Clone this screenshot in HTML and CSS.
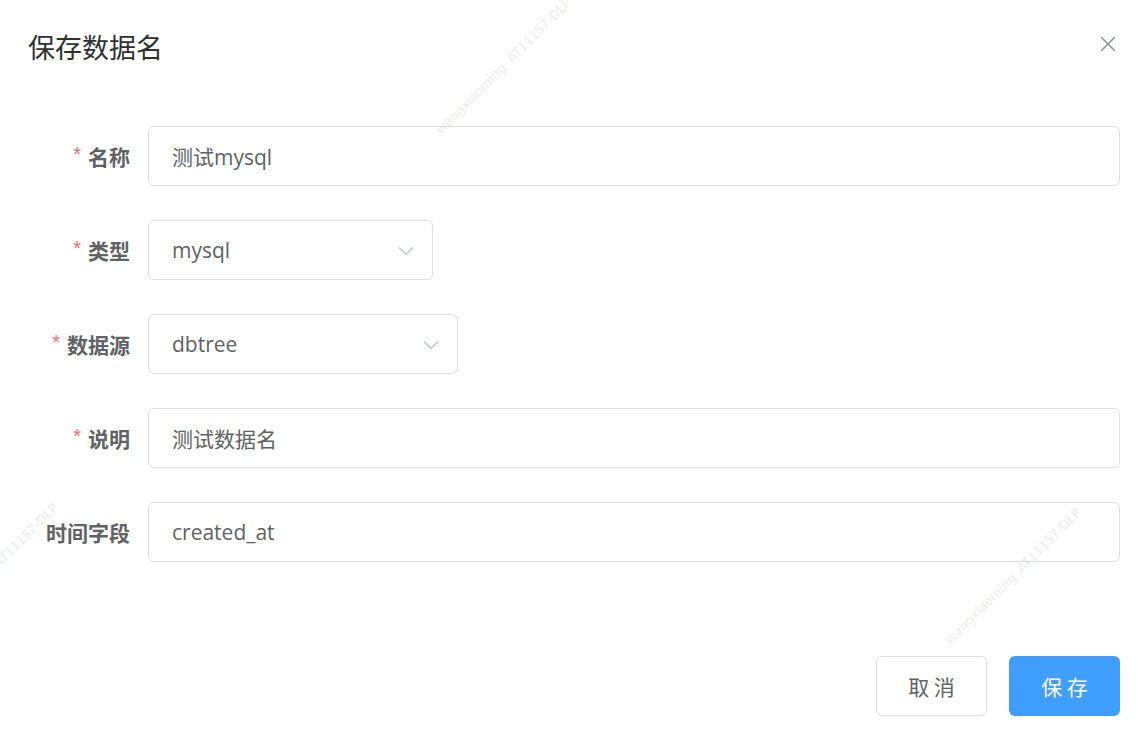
FILE: index.html
```html
<!DOCTYPE html>
<html lang="zh-CN">
<head>
<meta charset="utf-8">
<title>保存数据名</title>
<link rel="stylesheet" href="styles.css">
</head>
<body>
<div class="dialog">
  <div class="header">
    <div class="title">保存数据名</div>
    <svg class="close" width="16" height="16" viewBox="0 0 16 16"><path d="M1.5 1.5 L14.5 14.5 M14.5 1.5 L1.5 14.5" stroke="#909399" stroke-width="1.6" fill="none" stroke-linecap="round"/></svg>
  </div>
  <div class="form">
    <div class="row">
      <div class="label"><span class="req">*</span>名称</div>
      <div class="field wide">测试mysql</div>
    </div>
    <div class="row">
      <div class="label"><span class="req">*</span>类型</div>
      <div class="field select s1">mysql<svg class="arrow" width="16" height="10" viewBox="0 0 16 10"><path d="M1 1.5 L8 8.5 L15 1.5" stroke="#c0c4cc" stroke-width="1.5" fill="none"/></svg></div>
    </div>
    <div class="row">
      <div class="label"><span class="req">*</span>数据源</div>
      <div class="field select s2">dbtree<svg class="arrow" width="16" height="10" viewBox="0 0 16 10"><path d="M1 1.5 L8 8.5 L15 1.5" stroke="#c0c4cc" stroke-width="1.5" fill="none"/></svg></div>
    </div>
    <div class="row">
      <div class="label"><span class="req">*</span>说明</div>
      <div class="field wide">测试数据名</div>
    </div>
    <div class="row">
      <div class="label">时间字段</div>
      <div class="field wide">created_at</div>
    </div>
  </div>
  <div class="footer">
    <div class="btn cancel">取 消</div>
    <div class="btn primary">保 存</div>
  </div>
  <span class="wm wm1">wangxiaoming&nbsp;&nbsp;AT11157-DLP</span>
  <span class="wm wm2">wangxiaoming&nbsp;&nbsp;AT11157-DLP</span>
  <span class="wm wm3">wangxiaoming&nbsp;&nbsp;AT11157-DLP</span>
</div>
</body>
</html>
```
FILE: styles.css
```css
html, body {
  margin: 0;
  padding: 0;
  background: #ffffff;
}
body {
  font-family: "Open Sans", "Noto Sans CJK SC", sans-serif;
  color: #606266;
}
.dialog {
  position: relative;
  width: 1145px;
  height: 739px;
  overflow: hidden;
}
.header {
  height: 93px;
  display: flex;
  align-items: center;
  justify-content: space-between;
  padding: 0 29px 0 28px;
  box-sizing: border-box;
}
.title {
  font-family: "Noto Sans CJK SC", sans-serif;
  font-size: 27px;
  line-height: 1;
  color: #303133;
  margin-top: -1px;
}
.close {
  display: block;
  margin-top: -6px;
}
.form {
  padding: 33px 25px 0 0;
}
.row {
  display: flex;
  align-items: center;
  height: 60px;
  margin-bottom: 34px;
}
.row:last-child {
  margin-bottom: 0;
}
.label {
  width: 148px;
  height: 60px;
  flex-shrink: 0;
  box-sizing: border-box;
  padding-right: 18px;
  display: flex;
  align-items: center;
  justify-content: flex-end;
  font-family: "Noto Sans CJK SC", sans-serif;
  font-weight: bold;
  font-size: 21px;
  color: #606266;
  line-height: 1;
}
.req {
  color: #f56c6c;
  font-weight: normal;
  font-family: "Liberation Sans", sans-serif;
  margin-right: 7px;
  font-size: 20px;
  line-height: 1;
  margin-top: -4px;
}
.field {
  position: relative;
  height: 60px;
  box-sizing: border-box;
  border: 1px solid #dcdfe6;
  border-radius: 6px;
  padding: 0 23px;
  display: flex;
  align-items: center;
  font-size: 21px;
  color: #606266;
}
.wide {
  flex: 1;
}
.s1 {
  width: 285px;
}
.s2 {
  width: 310px;
}
.arrow {
  position: absolute;
  right: 18px;
  top: 25px;
}
.footer {
  display: flex;
  justify-content: flex-end;
  gap: 22px;
  padding: 94px 25px 0 0;
}
.btn {
  width: 111px;
  height: 60px;
  box-sizing: border-box;
  border-radius: 6px;
  display: flex;
  align-items: center;
  justify-content: center;
  font-family: "Noto Sans CJK SC", sans-serif;
  font-size: 21px;
}
.cancel {
  border: 1px solid #dcdfe6;
  color: #606266;
  background: #fff;
}
.primary {
  background: #409eff;
  color: #fff;
}
.wm {
  position: absolute;
  width: 240px;
  text-align: center;
  font-family: "DejaVu Sans", sans-serif;
  font-stretch: condensed;
  font-weight: bold;
  font-size: 14px;
  letter-spacing: -0.8px;
  line-height: 20px;
  color: rgba(0, 0, 0, 0.06);
  transform: rotate(-45deg);
  white-space: nowrap;
  pointer-events: none;
}
.wm1 { left: 383px; top: 56px; }
.wm2 { left: -130px; top: 561px; }
.wm3 { left: 893px; top: 566px; }
```
